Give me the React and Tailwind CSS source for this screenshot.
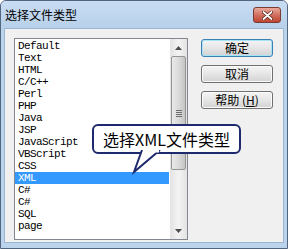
import React from 'react';

const items = [
    'Default', 'Text', 'HTML', 'C/C++', 'Perl', 'PHP', 'Java', 'JSP',
    'JavaScript', 'VBScript', 'CSS', 'XML', 'C#', 'C#', 'SQL', 'page',
];

const cjk = "font-['Noto_Sans_CJK_SC',sans-serif]";

const DialogButton = ({ children, isDefault }) => (
    <div
        className={`h-[18px] w-[72px] flex items-center justify-center rounded-[3px] border text-[12px] leading-none text-black ${cjk} bg-gradient-to-b from-[#f4f4f4] via-[#e6e6e6] to-[#d2d2d2] ${
            isDefault ? 'border-[#3c7fb1] shadow-[inset_0_0_0_1px_#a6e3f7]' : 'border-[#707070] shadow-[inset_0_0_0_1px_#fbfbfb]'
        }`}
    >
        {children}
    </div>
);

const ScrollArrow = ({ up }) => (
    <div className="h-[17px] w-[16px] flex items-center justify-center">
        <svg width="7" height="4" viewBox="0 0 7 4">
            <path d={up ? 'M0 4 L3.5 0 L7 4 Z' : 'M0 0 L3.5 4 L7 0 Z'} fill="#4d4d4d" />
        </svg>
    </div>
);

export default function App() {
    return (
        <div className="relative w-[288px] h-[249px] bg-[#bcd3ec] rounded-t-[6px] border border-[#52657f] flex flex-col overflow-hidden">
            {/* title bar */}
            <div className="h-[27px] flex items-center justify-between pl-[4px] pr-[6px] bg-gradient-to-b from-[#c9ddf3] to-[#b8d0ea]">
                <span className={`text-[12px] text-black ${cjk}`}>选择文件类型</span>
                <div className="mt-[1px] w-[28px] h-[16px] rounded-[3px] border border-[#7a3b32] bg-gradient-to-b from-[#e9a99c] via-[#d0705f] to-[#c0442f] flex items-center justify-center">
                    <svg width="11" height="9" viewBox="0 0 11 9">
                        <path d="M1.5 1 L9.5 8 M9.5 1 L1.5 8" stroke="#4a1d16" strokeWidth="3.2" strokeLinecap="round" />
                        <path d="M1.5 1 L9.5 8 M9.5 1 L1.5 8" stroke="#ffffff" strokeWidth="1.8" strokeLinecap="round" />
                    </svg>
                </div>
            </div>

            {/* client */}
            <div className="mx-[3px] mb-[5px] flex-1 bg-[#f0f0f0] border border-[#9fb6d1] flex pl-[9px] pt-[9px] pb-[2px]">
                {/* listbox */}
                <div className="w-[174px] h-[202px] border border-[#828790] bg-white flex">
                    <div className="flex-1 pt-[1px] flex flex-col">
                        {items.map((it, i) => (
                            <div
                                key={i}
                                className={`h-[12px] mr-[1px] pl-[3px] flex items-center font-['Liberation_Mono',monospace] text-[11px] tracking-[-0.6px] leading-none ${
                                    it === 'XML' && i === 11 ? 'bg-[#3399ff] text-white' : 'text-black'
                                }`}
                            >
                                {it}
                            </div>
                        ))}
                    </div>
                    <div className="w-[17px] flex flex-col bg-gradient-to-r from-[#e3e3e3] via-[#f3f3f3] to-[#e3e3e3]">
                        <ScrollArrow up />
                        <div className="mx-[1px] h-[114px] rounded-[2px] border border-[#959595] bg-gradient-to-r from-[#eaeaea] via-[#dadada] to-[#c4c4c4] flex items-center justify-center">
                            <div className="flex flex-col gap-[1px]">
                                <div className="w-[6px] h-[1px] bg-[#6e6e6e]" />
                                <div className="w-[6px] h-[1px] bg-[#6e6e6e]" />
                                <div className="w-[6px] h-[1px] bg-[#6e6e6e]" />
                                <div className="w-[6px] h-[1px] bg-[#6e6e6e]" />
                            </div>
                        </div>
                        <div className="flex-1" />
                        <ScrollArrow />
                    </div>
                </div>

                {/* buttons */}
                <div className="ml-[13px] pt-[1px] flex flex-col gap-[8px]">
                    <DialogButton isDefault>确定</DialogButton>
                    <DialogButton>取消</DialogButton>
                    <DialogButton>
                        帮助 (<span className="underline">H</span>)
                    </DialogButton>
                </div>
            </div>

            {/* callout */}
            <div className="absolute left-[91px] top-[123px]">
                <div className={`w-[149px] h-[30px] rounded-[6px] border-2 border-[#1f2a6e] bg-white flex items-center justify-center text-[16px] text-black ${cjk}`}>
                    选择XML文件类型
                </div>
                <svg className="absolute left-[20px] top-[26px]" width="50" height="26" viewBox="0 0 50 26">
                    <path d="M30 0 L22 22 L48 0" fill="white" stroke="#1f2a6e" strokeWidth="2" strokeLinejoin="miter" />
                    <rect x="31" y="0" width="16" height="2.5" fill="white" />
                </svg>
            </div>
        </div>
    );
}
